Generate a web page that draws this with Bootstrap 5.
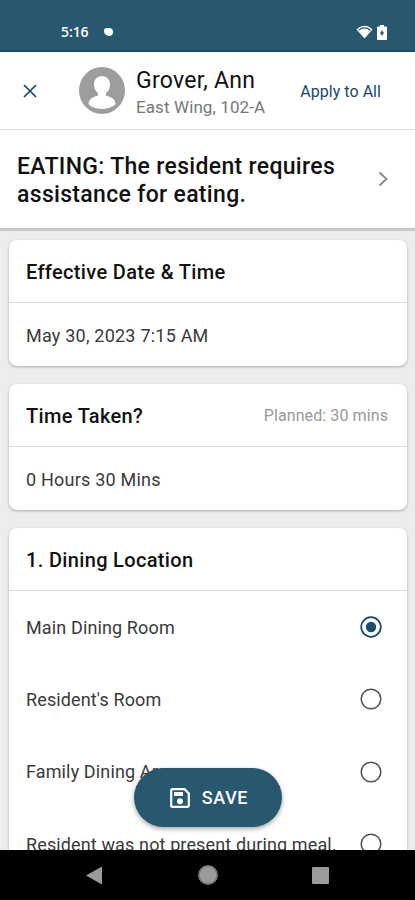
<!DOCTYPE html>
<html lang="en">
<head>
<meta charset="utf-8">
<meta name="viewport" content="width=device-width, initial-scale=1">
<title>Eating task</title>
<link href="https://cdn.jsdelivr.net/npm/bootstrap@5.3.0/dist/css/bootstrap.min.css" rel="stylesheet">
<style>
:root{--teal:#27586f;--navy:#17476a}
html,body{height:100%}
body{font-family:Roboto,"Liberation Sans",sans-serif;background:#ededed;color:#111;overflow:hidden}
svg{display:block;flex:none}
.screen{height:900px}
.status-strip{height:52px;background:var(--teal);border-bottom:2px solid #154c66;padding:22px 28px 0 61px}
.clock{font:600 14px/20px "Open Sans",Roboto,sans-serif;letter-spacing:-.1px}
.notif{width:9px;height:8px;border-radius:3px 4px 4px 5px;background:#fff;margin-left:16px}
.person-bar{height:78px;border-bottom:1px solid #dedede;padding:0 34px 0 23px}
.avatar{margin-left:42px}
.person-text{margin-left:11px;padding-top:6px}
.person-name{font-size:23px;line-height:28px;letter-spacing:.25px;color:#111}
.person-room{font-size:17px;line-height:25px;letter-spacing:.1px;color:#777}
.apply{font-size:16px;letter-spacing:.05px;color:var(--navy);padding-top:3px}
.task-bar{height:101px;border-bottom:3px solid #c9c9c9;padding:3px 25px 0 17px}
.task-title{font-size:23px;line-height:28px;font-weight:500;letter-spacing:.32px;color:#111;padding-top:1px}
.chevron{margin-bottom:3px}
.content{padding:9px 8px 0 9px;gap:18px}
.panel{--bs-card-border-radius:8px;border:0;box-shadow:0 1px 3px rgba(0,0,0,.3);flex:none}
.panel-head{height:63px;border-bottom:1px solid #d8d8d8;padding:2px 19px 0 17px}
.panel-title{font-size:20px;font-weight:500;letter-spacing:.34px;color:#111}
.planned{font-size:16px;letter-spacing:.1px;color:#999}
.panel-value{height:63px;padding:2px 17px 0;font-size:18px;letter-spacing:.22px;color:#3a3a3a}
.choice{height:72.3px;padding:0 25px 0 17px;font-size:18px;letter-spacing:.13px;color:#3a3a3a}
.save{left:134px;top:768px;width:148px;height:59px;background:var(--teal);color:#fff;font-size:18px;font-weight:500;letter-spacing:.6px;gap:12px;box-shadow:0 2px 5px rgba(0,0,0,.35)}
.save svg{margin-left:2px}
.system-nav{height:50px}
.nav-back{margin-left:86px}
.nav-home{margin-left:94px}
.nav-recent{margin-left:93px}
</style>
<script src="https://cdn.jsdelivr.net/npm/bootstrap@5.3.0/dist/js/bootstrap.bundle.min.js"></script>
</head>
<body>
<div class="screen d-flex flex-column position-relative overflow-hidden">
  <div class="status-strip d-flex align-items-start text-white flex-shrink-0">
    <div class="d-flex align-items-center w-100">
      <span class="clock">5:16</span><span class="notif"></span>
      <span class="ms-auto d-flex align-items-center">
        <svg width="17" height="14" viewBox="0 0 17 14"><path d="M.5 4.600C5-.5 12-.5 16.500 4.600L8.500 13.600z" fill="#fff"/><path d="M2.500 5.200Q8.500.5 14.500 5.200" fill="none" stroke="#27586f" stroke-width="1.100"/></svg>
        <svg class="ms-1" width="10" height="15" viewBox="0 0 10 15"><path d="M3 0h4v1.500h2q1 0 1 1V14q0 1-1 1H1q-1 0-1-1V2.500q0-1 1-1h2z" fill="#fff"/><path d="M5 5.500v5M3.200 8h3.600" stroke="#27586f" stroke-width="1.500"/></svg>
      </span>
    </div>
  </div>
  <header class="person-bar d-flex align-items-center bg-white flex-shrink-0">
    <svg width="14" height="14" viewBox="0 0 14 14"><path d="m1 1 12 12m0-12-12 12" stroke="#17476a" stroke-width="1.700"/></svg>
    <svg class="avatar" width="46" height="47" viewBox="0 0 46 47"><ellipse cx="23" cy="23.500" rx="23" ry="23.500" fill="#9d9d9d"/><path d="M23 9c-5 0-8 3.800-8 8.500 0 3.800 1.500 7 4 8.500v2.500C14 30 10 31.500 9.500 37 15 43.500 31 43.500 36.500 37 36 31.500 32 30 27 28.500V26c2.500-1.500 4-4.700 4-8.500C31 12.800 28 9 23 9z" fill="#fff"/></svg>
    <div class="person-text">
      <div class="person-name">Grover, Ann</div>
      <div class="person-room">East Wing, 102-A</div>
    </div>
    <span class="apply ms-auto">Apply to All</span>
  </header>
  <section class="task-bar d-flex align-items-center justify-content-between bg-white flex-shrink-0">
    <h1 class="task-title mb-0">EATING: The resident requires<br>assistance for eating.</h1>
    <svg class="chevron" width="14" height="16" viewBox="0 0 14 16"><path d="m3.500 1.500 7 6.500-7 6.500" fill="none" stroke="#8d8d8d" stroke-width="2"/></svg>
  </section>
  <main class="content d-flex flex-column flex-grow-1 overflow-hidden">
    <div class="card panel">
      <div class="panel-head d-flex align-items-center"><span class="panel-title">Effective Date &amp; Time</span></div>
      <div class="panel-value d-flex align-items-center">May 30, 2023 7:15 AM</div>
    </div>
    <div class="card panel">
      <div class="panel-head d-flex align-items-center justify-content-between"><span class="panel-title">Time Taken?</span><span class="planned">Planned: 30 mins</span></div>
      <div class="panel-value d-flex align-items-center">0 Hours 30 Mins</div>
    </div>
    <div class="card panel">
      <div class="panel-head d-flex align-items-center"><span class="panel-title">1. Dining Location</span></div>
      <div class="choice d-flex align-items-center justify-content-between"><span>Main Dining Room</span><svg width="22" height="22" viewBox="0 0 22 22"><circle cx="11" cy="11" r="9.800" fill="none" stroke="#17476a" stroke-width="1.700"/><circle cx="11" cy="11" r="5.200" fill="#17506f"/></svg></div>
      <div class="choice d-flex align-items-center justify-content-between"><span>Resident's Room</span><svg width="22" height="22" viewBox="0 0 22 22"><circle cx="11" cy="11" r="9.800" fill="none" stroke="#505050" stroke-width="1.500"/></svg></div>
      <div class="choice d-flex align-items-center justify-content-between"><span>Family Dining Area</span><svg width="22" height="22" viewBox="0 0 22 22"><circle cx="11" cy="11" r="9.800" fill="none" stroke="#505050" stroke-width="1.500"/></svg></div>
      <div class="choice d-flex align-items-center justify-content-between"><span>Resident was not present during meal.</span><svg width="22" height="22" viewBox="0 0 22 22"><circle cx="11" cy="11" r="9.800" fill="none" stroke="#505050" stroke-width="1.500"/></svg></div>
    </div>
  </main>
  <button class="save btn rounded-pill position-absolute d-flex align-items-center justify-content-center border-0 p-0" type="button">
    <svg width="20" height="20" viewBox="0 0 20 20"><path d="M2.500 1.200h12l4.300 4.300v12q0 1.300-1.300 1.300h-15q-1.300 0-1.300-1.300v-15q0-1.300 1.300-1.300z" fill="none" stroke="#fff" stroke-width="2.200"/><path d="M4 4h9v4H4z" fill="#fff"/><circle cx="10" cy="13.200" r="3" fill="#fff"/></svg>
    <span>SAVE</span>
  </button>
  <nav class="system-nav bg-black flex-shrink-0 d-flex align-items-center" aria-label="System">
    <svg class="nav-back" width="17" height="19" viewBox="0 0 17 19"><path d="M0 9.500 16 .5v18z" fill="#9b9b9b"/></svg>
    <svg class="nav-home" width="22" height="22" viewBox="0 0 22 22"><circle cx="11" cy="11" r="10" fill="#777"/><circle cx="11" cy="11" r="8.300" fill="#9b9b9b"/></svg>
    <svg class="nav-recent" width="17" height="17" viewBox="0 0 17 17"><rect width="17" height="17" rx="1" fill="#9b9b9b"/></svg>
  </nav>
</div>
</body>
</html>
